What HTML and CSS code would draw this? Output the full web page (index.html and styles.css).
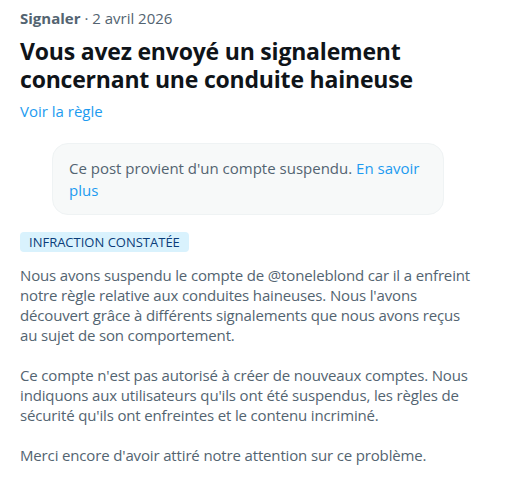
FILE: index.html
```html
<!DOCTYPE html>
<html lang="fr">
<head>
<meta charset="utf-8">
<link rel="stylesheet" href="styles.css">
</head>
<body>
<div class="page">
  <div class="meta"><span class="meta-strong">Signaler</span> · 2 avril 2026</div>
  <h1 class="title">Vous avez envoyé un signalement concernant une conduite haineuse</h1>
  <a class="link rule-link" href="#">Voir la règle</a>
  <div class="notice"><span>Ce post provient d'un compte suspendu.</span> <a class="link" href="#">En savoir plus</a></div>
  <div class="badge">INFRACTION CONSTATÉE</div>
  <div class="body">
    <p>Nous avons suspendu le compte de @toneleblond car il a enfreint notre règle relative aux conduites haineuses. Nous l'avons découvert grâce à différents signalements que nous avons reçus au sujet de son comportement.</p>
    <p>Ce compte n'est pas autorisé à créer de nouveaux comptes. Nous indiquons aux utilisateurs qu'ils ont été suspendus, les règles de sécurité qu'ils ont enfreintes et le contenu incriminé.</p>
    <p>Merci encore d'avoir attiré notre attention sur ce problème.</p>
  </div>
</div>
</body>
</html>
```
FILE: styles.css
```css
* { box-sizing: border-box; }
html, body { margin: 0; padding: 0; background: #ffffff; }
body {
  font-family: "Open Sans", "Noto Sans", "Liberation Sans", sans-serif;
  font-size: 15px;
  line-height: 20px;
  color: #536471;
}
.page {
  padding: 8px 20px 0 20px;
  display: flex;
  flex-direction: column;
  align-items: flex-start;
}
.meta { color: #536471; }
.meta-strong { font-weight: 700; }
.title {
  margin: 9px 0 0 0;
  font-size: 23px;
  line-height: 28px;
  font-weight: 700;
  color: #0f1419;
  letter-spacing: -0.2px;
}
.link { color: #1d9bf0; text-decoration: none; }
.rule-link { margin-top: 8px; }
.notice {
  margin: 22px 0 0 32px;
  width: 392px;
  padding: 13px 16px 13px 16px;
  background: #f7f9f9;
  border: 1px solid #eff3f4;
  border-radius: 16px;
  color: #536471;
  line-height: 22px;
}
.badge {
  margin-top: 17px;
  padding: 0 9px;
  height: 20px;
  line-height: 20px;
  font-size: 13px;
  color: #0b3d7a;
  background: #d9f2fd;
  border-radius: 4px;
}
.body { margin-top: 13px; width: 456px; letter-spacing: -0.15px; }
.body p { margin: 0 0 20px 0; }
```
